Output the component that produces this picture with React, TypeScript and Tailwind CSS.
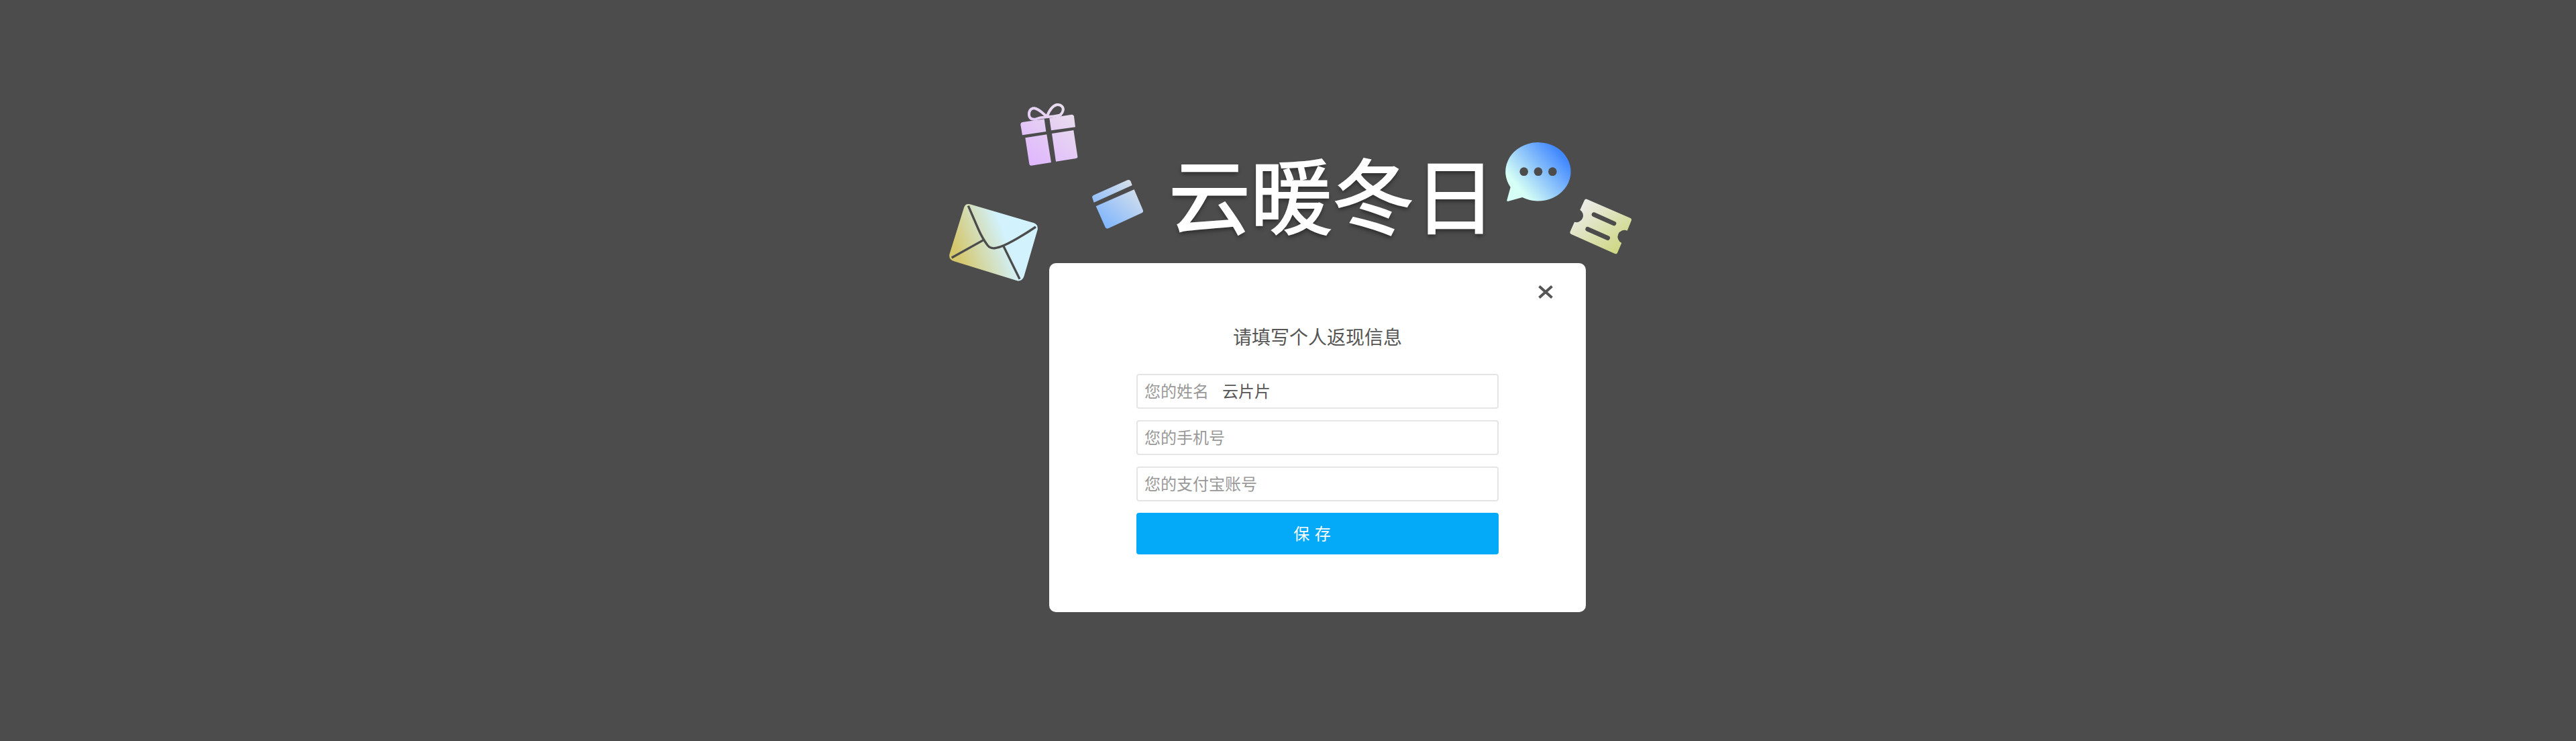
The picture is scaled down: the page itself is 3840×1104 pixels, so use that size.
import { useState } from 'react';

const BACKDROP = '#4c4c4c';

function Decorations() {
  return (
    <svg
      aria-hidden="true"
      className="pointer-events-none absolute -left-40 -top-13 h-[290px] w-[1040px] max-w-none"
      viewBox="1404 140 1040 290"
      fill="none"
    >
      <defs>
        <linearGradient id="gift" gradientUnits="userSpaceOnUse" x1="430" y1="330" x2="610" y2="110">
          <stop offset="0" stopColor="#dfb7fe" />
          <stop offset="1" stopColor="#e9ddee" />
        </linearGradient>
        <linearGradient id="card" gradientUnits="userSpaceOnUse" x1="750" y1="610" x2="905" y2="440">
          <stop offset="0" stopColor="#7fb5fd" />
          <stop offset="1" stopColor="#d5e0ec" />
        </linearGradient>
        <linearGradient id="mail" gradientUnits="userSpaceOnUse" x1="105" y1="740" x2="350" y2="650">
          <stop offset="0" stopColor="#d5c76b" />
          <stop offset="0.9" stopColor="#d2f2fe" />
        </linearGradient>
        <linearGradient id="bubble" gradientUnits="userSpaceOnUse" x1="125" y1="262" x2="310" y2="105">
          <stop offset="0" stopColor="#d6fff6" />
          <stop offset="1" stopColor="#4288ff" />
        </linearGradient>
        <linearGradient id="ticket" gradientUnits="userSpaceOnUse" x1="420" y1="345" x2="575" y2="550">
          <stop offset="0" stopColor="#ebebe6" />
          <stop offset="1" stopColor="#ced884" />
        </linearGradient>
      </defs>

      <g transform="translate(1390 130) scale(0.33333)">
        <g fill="url(#gift)">
          <path d="M394 168Q393 158 403 156L500 142L508 198L402 214Z" />
          <path d="M523 138L622 122Q631 121 633 130L639 178L531 193Z" />
          <path d="M415 226L511 211L531 336L442 350Q434 351 433 343Z" />
          <path d="M534 207L631 192L649 310Q650 317 642 318L552 332Z" />
        </g>
        <path
          d="M509 130C494 117 478 98 456 94C440 92 430 107 432 125C434 140 446 144 460 143M513 128C522 106 538 81 557 78C576 76 587 90 584 103C581 118 571 126 557 130M456 144Q480 135 509 133Q540 131 573 124"
          stroke="url(#gift)"
          strokeWidth="12"
          strokeLinecap="round"
        />

        <g fill="url(#card)">
          <path d="M716 497Q711 487 721 482L872 415Q882 411 887 421L893 438L722 515Z" />
          <path d="M731 532L902 457L941 548Q945 557 936 562L788 630Q779 635 773 626Z" />
        </g>

        <path
          d="M141 538Q147 518 168 523L452 606Q474 613 470 637L410 843Q402 869 379 865L97 778Q72 771 76 747Z"
          fill="url(#mail)"
        />
        <path
          d="M160 530L206 636Q224 676 246 706Q260 724 284 718Q300 716 322 706Q375 682 462 624M228 683L86 762M317 709L390 857"
          stroke={BACKDROP}
          strokeWidth="10"
        />
      </g>

      <g transform="translate(2220 190) scale(0.33333)">
        <path
          d="M95 267A146 131 0 1 1 148 312L83 330Q79 331 79 325Z"
          fill="url(#bubble)"
        />
        <g fill={BACKDROP}>
          <circle cx="155" cy="197" r="19" />
          <circle cx="219" cy="197" r="19" />
          <circle cx="283" cy="197" r="19" />
        </g>
        <path
          d="M425 326Q429 317 438 321L630 404Q639 408 635 417L617 461A30 30 0 0 0 592 516L573 560Q570 567 562 564L367 477Q359 473 362 465L381 422A30 30 0 0 0 406 368Z"
          fill="url(#ticket)"
        />
        <path
          d="M468 389L558 429M440 454L530 494"
          stroke={BACKDROP}
          strokeWidth="20"
          strokeLinecap="round"
        />
      </g>
    </svg>
  );
}

type FieldProps = {
  id: string;
  label: string;
  value: string;
  onChange: (value: string) => void;
};

function Field({ id, label, value, onChange }: FieldProps) {
  return (
    <div className="flex h-[52px] items-center gap-5 rounded border-2 border-[#e5e5e5] bg-white px-2.5 pb-0.5 text-[24px] leading-9">
      <label htmlFor={id} className="shrink-0 text-[#999999]">
        {label}
      </label>
      <input
        id={id}
        value={value}
        onChange={(event) => onChange(event.target.value)}
        className="min-w-0 flex-1 bg-transparent text-[#555555] outline-none"
      />
    </div>
  );
}

export default function App() {
  const [name, setName] = useState('云片片');
  const [phone, setPhone] = useState('');
  const [account, setAccount] = useState('');

  return (
    <main
      lang="zh-CN"
      className="flex min-h-screen items-center justify-center bg-[#4c4c4c] pl-[88px] font-['Noto_Sans_CJK_SC',sans-serif]"
    >
      <div className="w-full max-w-[800px]">
        <header className="relative flex h-50 items-center justify-center pb-3 pl-11">
          <Decorations />
          <h1 className="whitespace-nowrap text-[122px] leading-none font-normal text-white [-webkit-text-stroke:2px_white] [text-shadow:0_4px_6px_rgba(0,0,0,0.45)]">
            云暖冬日
          </h1>
        </header>

        <section
          role="dialog"
          aria-labelledby="dialog-title"
          className="relative rounded-[10px] bg-white px-[130px] pt-[89px] pb-[86px]"
        >
          <button
            type="button"
            aria-label="关闭"
            className="absolute top-[23px] right-10 flex size-10 items-center justify-center"
          >
            <svg viewBox="0 0 22 20" className="h-5 w-[22px]" fill="none">
              <path d="M1.5 1.5L20.5 18.5M20.5 1.5L1.5 18.5" stroke="#555555" strokeWidth="4" />
            </svg>
          </button>

          <h2
            id="dialog-title"
            className="text-center text-[28px] leading-10 font-normal text-[#555555]"
          >
            请填写个人返现信息
          </h2>

          <form
            className="mt-9 flex flex-col gap-[17px]"
            onSubmit={(event) => event.preventDefault()}
          >
            <Field id="name" label="您的姓名" value={name} onChange={setName} />
            <Field id="phone" label="您的手机号" value={phone} onChange={setPhone} />
            <Field id="account" label="您的支付宝账号" value={account} onChange={setAccount} />
            <button
              type="submit"
              className="h-[62px] rounded bg-[#04a9f7] pt-0.5 pr-4 font-['DejaVu_Sans','Noto_Sans_CJK_SC',sans-serif] text-[24px] leading-9 text-white"
            >
              保 存
            </button>
          </form>
        </section>
      </div>
    </main>
  );
}
